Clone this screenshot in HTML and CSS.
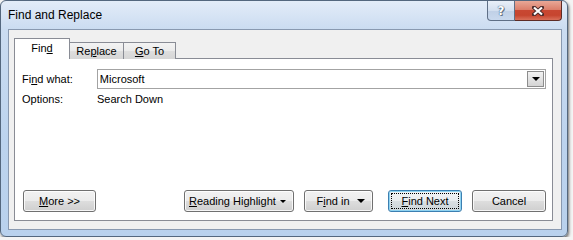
FILE: index.html
```html
<!DOCTYPE html>
<html lang="en">

<head>
    <meta charset="UTF-8">
    <meta name="viewport" content="width=device-width, initial-scale=1.0">
    <title>Find and Replace</title>
    <link rel="stylesheet" href="styles.css">
</head>

<body>
    <div class="window">
        <div class="titlebar">
            <span class="title">Find and Replace</span>
            <div class="caption">
                <span class="cap-btn help">?</span>
                <span class="cap-btn close">
                    <svg width="12" height="10" viewBox="0 0 12 10">
                        <path d="M2 1.5 L10 8.5 M10 1.5 L2 8.5" stroke="#4a2a2a" stroke-width="4" stroke-linecap="square" fill="none" />
                        <path d="M2 1.5 L10 8.5 M10 1.5 L2 8.5" stroke="#fff" stroke-width="2.2" fill="none" />
                    </svg>
                </span>
            </div>
        </div>
        <div class="client">
            <div class="tabs">
                <div class="tab active">Fin<u>d</u></div>
                <div class="tab t-replace">Re<u>p</u>lace</div>
                <div class="tab t-goto"><u>G</u>o To</div>
            </div>
            <div class="panel">
                <div class="row find-row">
                    <span class="label">Fi<u>n</u>d what:</span>
                    <div class="combo">
                        <span class="combo-text">Microsoft</span>
                        <span class="drop"><i class="arrow"></i></span>
                    </div>
                </div>
                <div class="row options-row">
                    <span class="label">Options:</span>
                    <span>Search Down</span>
                </div>
                <div class="buttons">
                    <div class="btn more"><u>M</u>ore &gt;&gt;</div>
                    <div class="btn highlight"><span><u>R</u>eading Highlight</span><i class="arrow small"></i></div>
                    <div class="btn findin"><span>F<u>i</u>nd in</span><i class="arrow"></i></div>
                    <div class="btn findnext"><span class="focus"><u>F</u>ind Next</span></div>
                    <div class="btn cancel">Cancel</div>
                </div>
            </div>
        </div>
    </div>
</body>

</html>
```

FILE: styles.css
```css
*{margin:0;padding:0;box-sizing:border-box;}
body{background:#f4f4f4;font-family:"Liberation Sans",Arial,sans-serif;font-size:11px;color:#000;}
u{text-decoration:underline;text-underline-offset:1px;}

/* window frame */
.window{width:568px;height:237px;border:1px solid #54677e;border-radius:6px;padding:0 5px 6px 7px;background:linear-gradient(to bottom,#e3ecf8 0,#cbdcf1 28px,#bcd3ee 60%,#b9d1ed 100%);box-shadow:1px 2px 3px rgba(0,0,0,.55);display:flex;flex-direction:column;}
.titlebar{height:28px;display:flex;justify-content:space-between;align-items:flex-start;}
.title{font-size:12px;line-height:16px;padding-top:6px;color:#000;}
.caption{display:flex;}
.cap-btn{height:20px;display:flex;align-items:center;justify-content:center;border:1px solid #5f6f86;border-top:none;}
.help{width:28px;border-radius:0 0 0 4px;background:linear-gradient(to bottom,#e9eff8 0,#d3dfef 50%,#c0d0e6 51%,#c9d9ee 100%);color:#fff;font-family:"DejaVu Sans",sans-serif;font-size:12px;font-weight:bold;text-shadow:0 0 1px #4a5a70,0 0 1px #4a5a70,1px 1px 0 #6a7a90;}
.close{width:47px;border-left:none;border-color:#5d2b25;border-radius:0 0 4px 0;background:linear-gradient(to bottom,#e9a897 0,#dc7f6b 45%,#c84732 50%,#c6452f 75%,#d9705a 100%);}

/* client area */
.client{flex:1;background:#f0f0f0;border:1px solid #8999b0;padding:8px 8px 8px 5px;display:flex;flex-direction:column;}
.tabs{display:flex;align-items:flex-end;height:21px;position:relative;z-index:1;}
.tab{height:17px;border:1px solid #898c95;border-bottom:none;background:linear-gradient(to bottom,#f3f3f3 0,#ebebeb 50%,#dedede 51%,#d6d6d6 100%);display:flex;align-items:center;justify-content:center;margin-left:-1px;}
.tab.active{height:21px;width:56px;margin-left:0;background:#fff;padding-bottom:2px;position:relative;z-index:2;}
.t-replace{width:55px;}
.t-goto{width:53px;}
.panel{flex:1;background:#fff;border:1px solid #898c95;margin-top:-1px;display:flex;flex-direction:column;padding:10px 6px 8px 7px;}

.row{display:flex;align-items:center;}
.label{width:75px;}
.find-row{height:19px;}
.combo{width:450px;height:20px;border:1px solid #a3a3a3;display:flex;align-items:center;justify-content:space-between;padding:0 1px 0 2px;}
.drop{width:17px;height:16px;border:1px solid #8d8d8d;background:linear-gradient(to bottom,#f2f2f2 0,#e3e3e3 50%,#d4d4d4 100%);display:flex;align-items:center;justify-content:center;}
.arrow{width:0;height:0;border-left:4px solid transparent;border-right:4px solid transparent;border-top:4px solid #000;display:block;}
.arrow.small{border-left-width:3px;border-right-width:3px;border-top-width:3px;}
.options-row{margin-top:3px;height:15px;}

/* buttons */
.buttons{margin-top:auto;display:flex;padding-left:1px;}
.btn{height:22px;border:1px solid #707070;border-radius:3px;background:linear-gradient(to bottom,#f2f2f2 0,#ebebeb 50%,#dddddd 51%,#cfcfcf 100%);box-shadow:inset 0 0 0 1px rgba(255,255,255,.8);display:flex;align-items:center;justify-content:center;}
.more{width:73px;}
.highlight{width:110px;margin-left:auto;justify-content:space-between;padding:0 7px 0 4px;}
.findin{width:69px;margin-left:10px;gap:7px;padding-left:4px;}
.findnext{width:74px;margin-left:15px;border-color:#3c7fb1;box-shadow:inset 0 0 0 1px #8fd3f1;background:linear-gradient(to bottom,#f1f4f6 0,#e8ecef 50%,#d9dfe3 51%,#ccd4d9 100%);padding:2px;}
.focus{flex:1;align-self:stretch;border:1px dotted #000;display:flex;align-items:center;justify-content:center;}
.cancel{width:74px;margin-left:10px;}
```
